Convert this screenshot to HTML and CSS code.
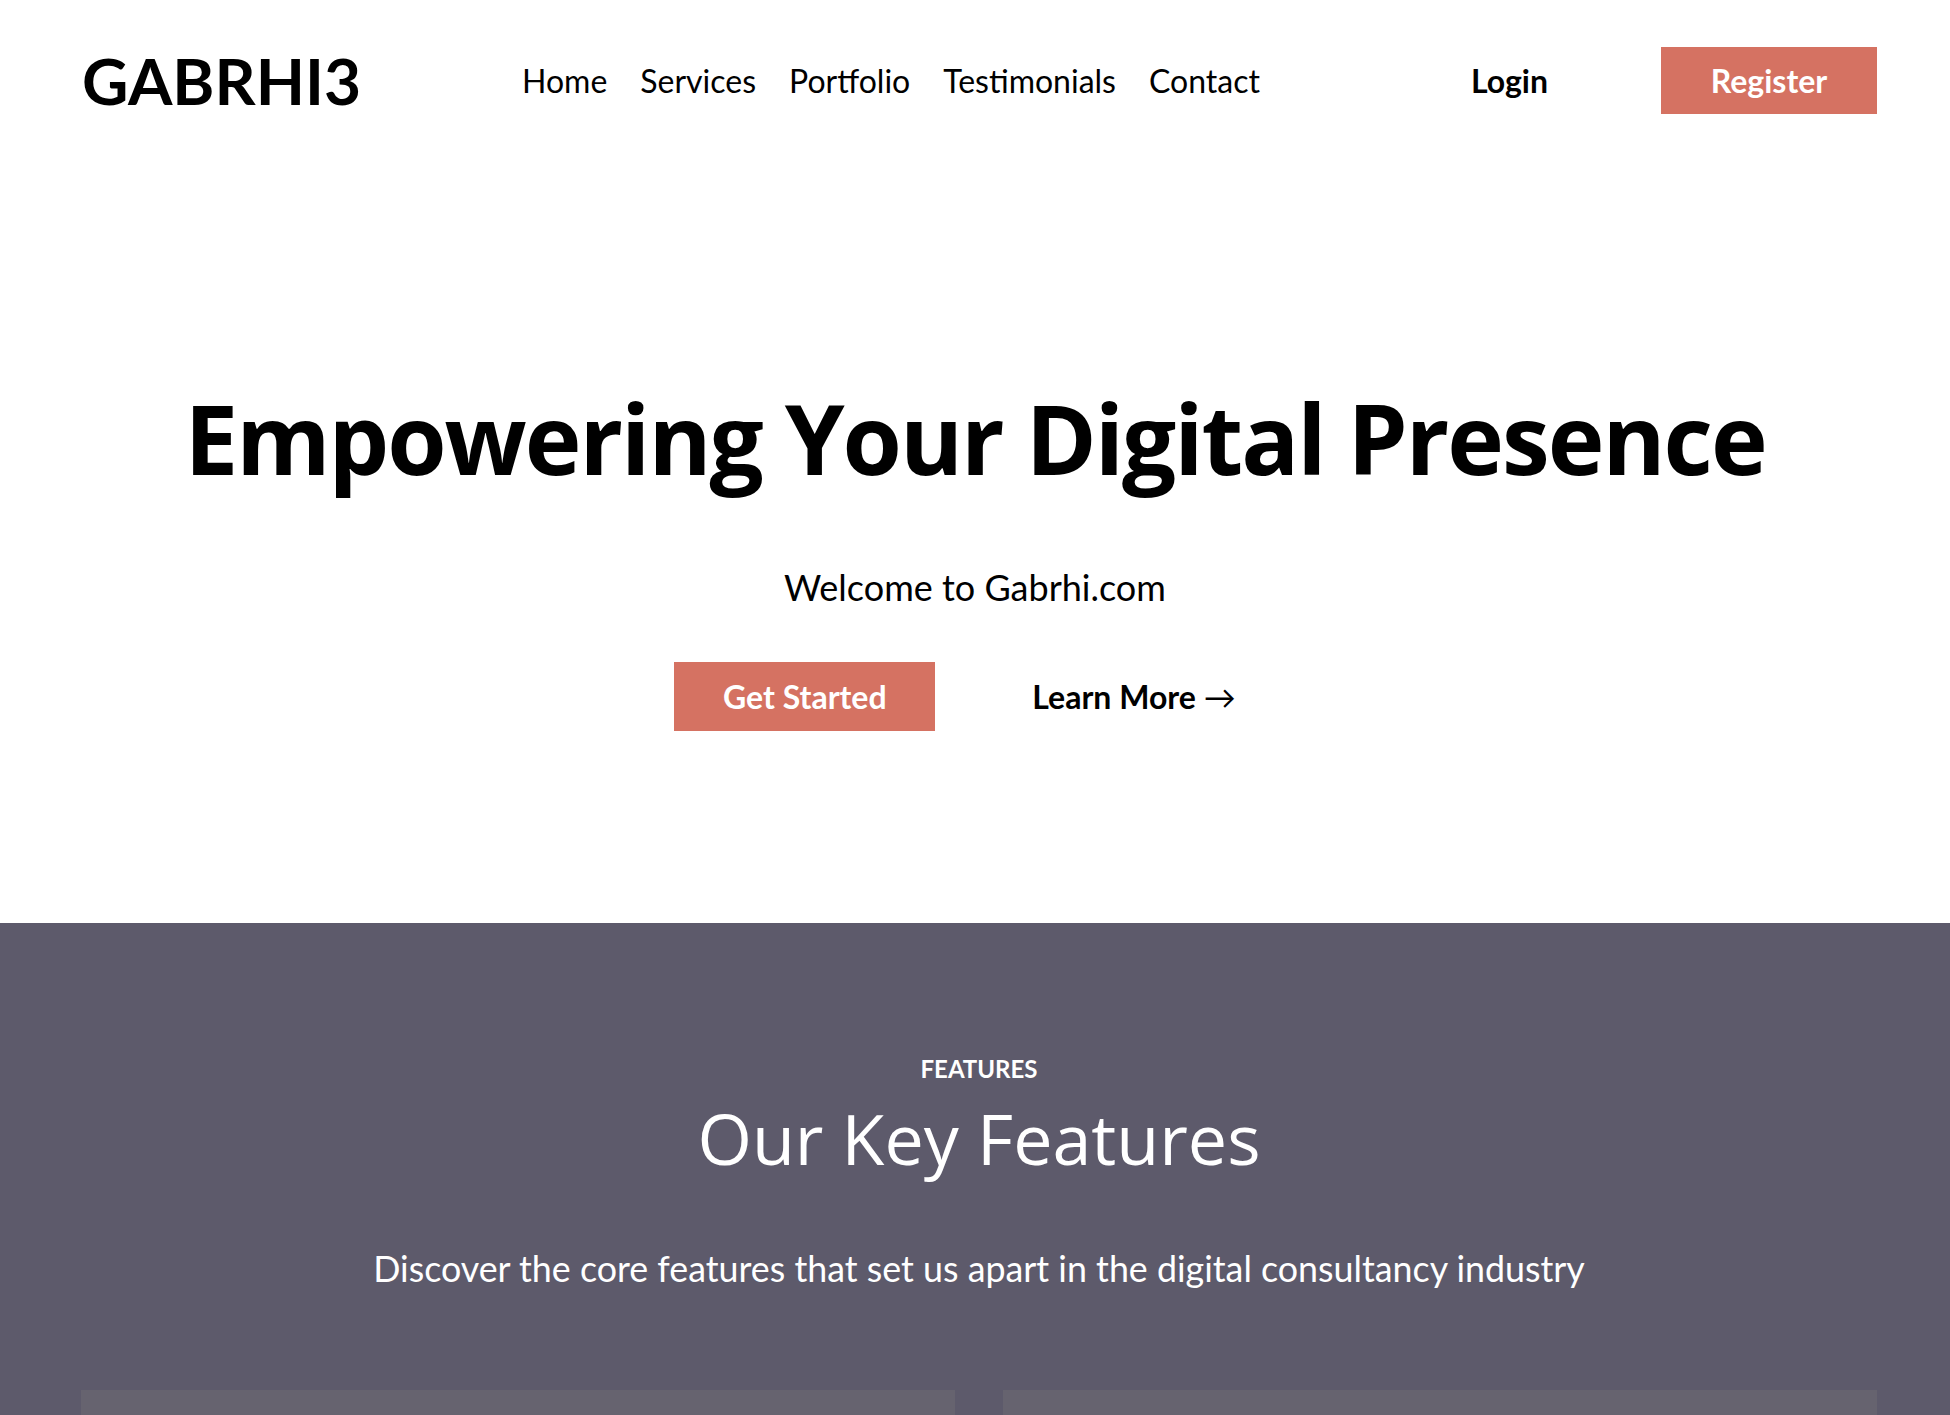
FILE: index.html
```html
<!DOCTYPE html>
<html lang="en">
<head>
<meta charset="utf-8">
<title>Gabrhi</title>
<link rel="stylesheet" href="styles.css">
</head>
<body>
<header class="site-header">
  <a class="logo" href="#">GABRHI3</a>
  <nav class="main-nav">
    <a href="#">Home</a>
    <a href="#">Services</a>
    <a href="#">Portfolio</a>
    <a href="#">Testimonials</a>
    <a href="#">Contact</a>
  </nav>
  <div class="auth">
    <a class="login" href="#">Login</a>
    <a class="btn btn-primary register" href="#">Register</a>
  </div>
</header>

<section class="hero">
  <h1 class="hero-title">Empowering Your Digital Presence</h1>
  <p class="hero-sub">Welcome to Gabrhi.com</p>
  <div class="hero-actions">
    <a class="btn btn-primary get-started" href="#">Get Started</a>
    <a class="learn-more" href="#">Learn More <span class="arrow">&rarr;</span></a>
  </div>
</section>

<section class="features">
  <p class="eyebrow">FEATURES</p>
  <h2 class="features-title">Our Key Features</h2>
  <p class="features-desc">Discover the core features that set us apart in the digital consultancy industry</p>
  <div class="cards">
    <div class="card"></div>
    <div class="card"></div>
  </div>
</section>
</body>
</html>
```

FILE: styles.css
```css
* { box-sizing: border-box; }
html, body { margin: 0; padding: 0; }
body {
  font-family: Lato, "Liberation Sans", sans-serif;
  color: #000;
  background: #fff;
  height: 1415px;
  overflow: hidden;
}
a { color: inherit; text-decoration: none; }

.site-header {
  display: flex;
  align-items: center;
  height: 160px;
  padding: 0 73px 0 82px;
}
.logo {
  font-size: 64px;
  font-weight: 700;
  width: 440px;
}
.main-nav {
  display: flex;
  gap: 33px;
  font-size: 32px;
}
.auth {
  margin-left: auto;
  display: flex;
  align-items: center;
  gap: 113px;
}
.login { font-size: 32px; font-weight: 700; }

.btn {
  display: inline-flex;
  align-items: center;
  justify-content: center;
  background: #d57262;
  color: #fff;
  font-weight: 700;
  font-size: 32px;
}
.register { width: 216px; height: 67px; }

.hero {
  height: 763px;
  display: flex;
  flex-direction: column;
  align-items: center;
  padding-top: 220px;
}
.hero-title {
  margin: 0;
  font-family: "Open Sans", Lato, sans-serif;
  font-weight: 700;
  font-size: 96px;
  line-height: 1.2;
  letter-spacing: -2px;
}
.hero-sub {
  margin: 70px 0 0;
  font-size: 36px;
}
.hero-actions {
  margin-top: 53px;
  display: flex;
  align-items: center;
  gap: 97px;
}
.get-started { width: 261px; height: 69px; }
.learn-more {
  font-size: 32px;
  font-weight: 700;
  padding-right: 40px;
}
.arrow { font-weight: 400; }

.features {
  background: #5d5a6b;
  color: #fff;
  text-align: center;
  padding: 131px 73px 0 81px;
  height: 492px;
}
.eyebrow {
  margin: 0;
  font-size: 24px;
  font-weight: 700;
}
.features-title {
  margin: 7px 0 0;
  font-family: "Open Sans", Lato, sans-serif;
  font-weight: 500;
  font-size: 70px;
}
.features-desc {
  margin: 61px 0 0;
  font-size: 35.8px;
}
.cards {
  margin-top: 100px;
  display: grid;
  grid-template-columns: 1fr 1fr;
  gap: 48px;
}
.card {
  background: #66636f;
  height: 300px;
}
```
